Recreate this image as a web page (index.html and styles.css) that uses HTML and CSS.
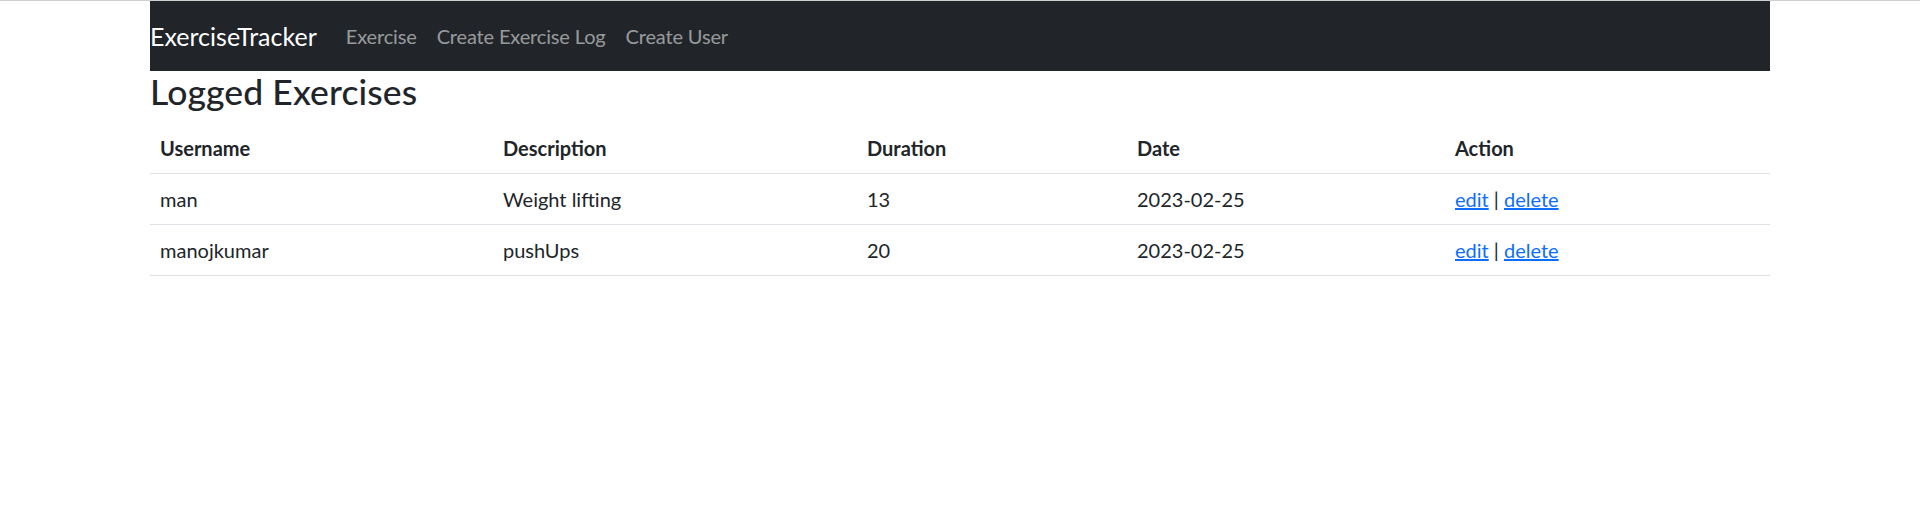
FILE: index.html
```html
<!DOCTYPE html>
<html lang="en">
<head>
<meta charset="utf-8">
<title>ExerciseTracker</title>
<link rel="stylesheet" href="styles.css">
</head>
<body>
<div class="container">
  <nav class="navbar">
    <a class="brand" href="#">ExerciseTracker</a>
    <ul class="nav">
      <li><a class="nav-link" href="#">Exercise</a></li>
      <li><a class="nav-link" href="#">Create Exercise Log</a></li>
      <li><a class="nav-link" href="#">Create User</a></li>
    </ul>
  </nav>
  <h3 class="title">Logged Exercises</h3>
  <table class="table">
    <colgroup>
      <col class="c1"><col class="c2"><col class="c3"><col class="c4"><col class="c5">
    </colgroup>
    <thead>
      <tr><th>Username</th><th>Description</th><th>Duration</th><th>Date</th><th>Action</th></tr>
    </thead>
    <tbody>
      <tr><td>man</td><td>Weight lifting</td><td>13</td><td>2023-02-25</td><td><a href="#">edit</a> | <a href="#">delete</a></td></tr>
      <tr><td>manojkumar</td><td>pushUps</td><td>20</td><td>2023-02-25</td><td><a href="#">edit</a> | <a href="#">delete</a></td></tr>
    </tbody>
  </table>
</div>
</body>
</html>
```
FILE: styles.css
```css
* { box-sizing: border-box; }
html, body { margin: 0; padding: 0; }
body {
  font-family: Lato, "Open Sans", sans-serif;
  font-size: 20px;
  line-height: 1.5;
  color: #212529;
  background: #fff;
  border-top: 1px solid #cfcfcf;
}
.container {
  width: 1620px;
  margin: 0 auto;
}
.navbar {
  display: flex;
  align-items: center;
  height: 70px;
  background: #212529;
}
.brand {
  font-size: 25px;
  line-height: 37px;
  color: #fff;
  text-decoration: none;
  margin-right: 19px;
}
.nav {
  display: flex;
  list-style: none;
  margin: 0;
  padding: 0;
}
.nav-link {
  display: block;
  padding: 10px;
  letter-spacing: -0.15px;
  color: rgba(255,255,255,0.55);
  text-decoration: none;
}
.title {
  font-size: 35.5px;
  font-weight: 500;
  line-height: 42px;
  letter-spacing: 0.1px;
  margin: 0 0 10px;
}
.table {
  width: 100%;
  border-collapse: collapse;
  table-layout: fixed;
}
.c1 { width: 343px; }
.c2 { width: 364px; }
.c3 { width: 270px; }
.c4 { width: 318px; }
.c5 { width: 325px; }
.table th, .table td {
  text-align: left;
  padding: 10px;
  border-bottom: 1px solid #dee2e6;
}
.table th { font-weight: 700; vertical-align: bottom; }
.table td { vertical-align: top; }
.table a { color: #0d6efd; text-decoration: underline; }
```
